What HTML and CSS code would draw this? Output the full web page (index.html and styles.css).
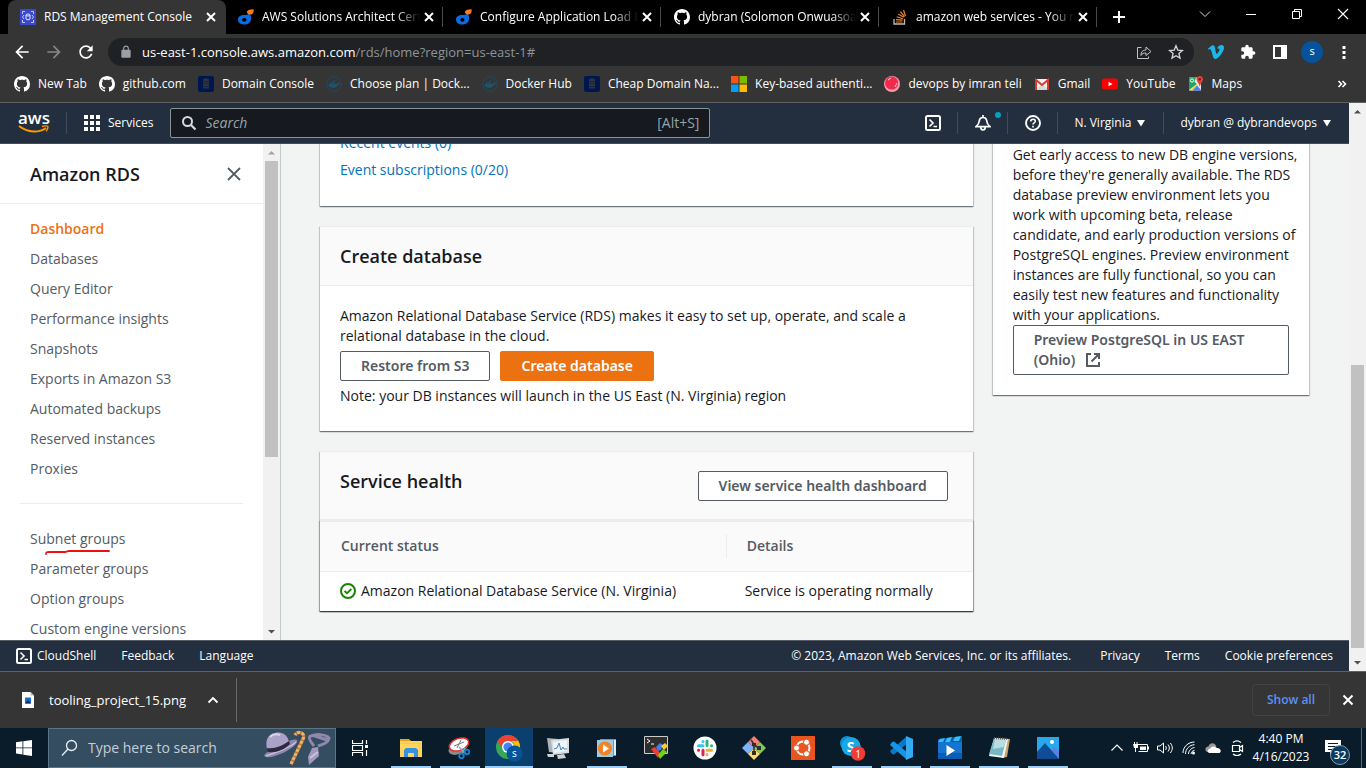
FILE: index.html
```html
<!DOCTYPE html>
<html lang="en">
<head>
<meta charset="utf-8">
<title>RDS Management Console</title>
<link rel="stylesheet" href="styles.css">
</head>
<body>
<svg class="sprite" aria-hidden="true">
  <symbol id="close" viewBox="0 0 16 16"><path d="M4 4l8 8M12 4l-8 8" fill="none" stroke="currentColor" stroke-width="2"/></symbol>
  <symbol id="github" viewBox="0 0 16 16"><path fill="#fff" d="M8 0C3.58 0 0 3.58 0 8c0 3.54 2.29 6.53 5.47 7.59.4.07.55-.17.55-.38 0-.19-.01-.82-.01-1.49-2.01.37-2.53-.49-2.69-.94-.09-.23-.48-.94-.82-1.13-.28-.15-.68-.52-.01-.53.63-.01 1.08.58 1.23.82.72 1.21 1.87.87 2.33.66.07-.52.28-.87.51-1.07-1.78-.2-3.64-.89-3.64-3.95 0-.87.31-1.59.82-2.15-.08-.2-.36-1.02.08-2.12 0 0 .67-.21 2.2.82.64-.18 1.32-.27 2-.27s1.36.09 2 .27c1.53-1.04 2.2-.82 2.2-.82.44 1.1.16 1.92.08 2.12.51.56.82 1.27.82 2.15 0 3.07-1.87 3.75-3.65 3.95.29.25.54.73.54 1.48 0 1.07-.01 1.93-.01 2.2 0 .21.15.46.55.38A8.01 8.01 0 0 0 16 8c0-4.42-3.58-8-8-8z"/></symbol>
  <symbol id="drop" viewBox="0 0 16 16"><path fill="#0b6be0" fill-rule="evenodd" d="M11.500 4.500L13 7c1 5-2 8.500-6.500 8.500C2.500 15.500 0 13.500 0 10.500S2.500 6 6 6c2 0 4.500 0 5.500-1.500zM6.300 9a2.200 1.800 0 1 0 .1 0z"/><path fill="#ff7a1a" d="M9 2.500C10 .5 12 .5 15.500.2c.6 2-.2 4.800-2.500 5.300C10.500 6 8.500 4.500 9 2.500z"/></symbol>
  <symbol id="docker" viewBox="0 0 16 16"><circle cx="8" cy="8" r="7.300" fill="none" stroke="#1f4a60"/><path fill="#23526c" d="M2.500 8h9c.2-.8 0-1.300-.2-1.700l.6-.6c.6.4.9.9.9 1.400.5-.1 1 0 1.300.3-.5.8-1.200 1-2 1-.8 2.400-2.600 3.400-5 3.400-2.900 0-4.500-1.300-4.600-3.800zM4 6.200h1.400v1.400H4zM5.800 6.200h1.400v1.400H5.800zM7.600 6.200H9v1.400H7.600zM7.600 4.400H9v1.400H7.600z"/></symbol>
  <symbol id="dbook" viewBox="0 0 16 16"><rect width="16" height="16" rx="2" fill="#00164e"/><path stroke="#2d3340" stroke-width="1.800" d="M5 4h6M5 6.500h6M5 9h6M5 11.500h6"/><path stroke="#2d3340" d="M7 2.500h2"/></symbol>
  <symbol id="shell" viewBox="0 0 16 16"><rect x="1" y="1" width="14" height="14" rx="1.500" fill="none" stroke="#fff" stroke-width="2"/><path d="M4.500 4.500L8 8l-3.500 3.500M8.500 11.500H12" fill="none" stroke="#fff" stroke-width="1.700"/></symbol>
</svg>

<header class="browser">
  <div class="tabstrip">
    <div class="tab active">
      <svg class="i16" viewBox="0 0 16 16"><rect width="16" height="16" fill="#3b48cc"/><path d="M2.500 5V2.500H5M11 2.500h2.500V5M13.500 11v2.500H11M5 13.500H2.500V11M4 6L2.500 8 4 10M12 6l1.500 2-1.500 2" fill="none" stroke="#c3c9fa"/><path d="M6 6v4c.5 1 3.500 1 4 0V6" fill="none" stroke="#e6e8ff"/><ellipse cx="8" cy="6" rx="2" ry="1" fill="none" stroke="#e6e8ff"/></svg>
      <span class="tab-title">RDS Management Console</span><button class="plain" aria-label="Close tab"><svg class="i16"><use href="#close"/></svg></button>
    </div>
    <div class="tab"><svg class="i16"><use href="#drop"/></svg><span class="tab-title fade">AWS Solutions Architect Certi</span><button class="plain" aria-label="Close tab"><svg class="i16"><use href="#close"/></svg></button></div>
    <div class="tab"><svg class="i16"><use href="#drop"/></svg><span class="tab-title fade">Configure Application Load B</span><button class="plain" aria-label="Close tab"><svg class="i16"><use href="#close"/></svg></button></div>
    <div class="tab"><svg class="i16"><use href="#github"/></svg><span class="tab-title fade">dybran (Solomon Onwuasoa</span><button class="plain" aria-label="Close tab"><svg class="i16"><use href="#close"/></svg></button></div>
    <div class="tab">
      <svg class="i16" viewBox="0 0 16 16"><path d="M2 10v5h10.500v-5" fill="none" stroke="#bcbbbb" stroke-width="1.300"/><path d="M4 13h6.500M4 10.600l6.500.6M4.700 7.800l6.200 1.900M6.200 5l5.500 3.300M8.500 2.700l4 5M11.500 1l2 6" fill="none" stroke="#f48024" stroke-width="1.200"/></svg>
      <span class="tab-title fade">amazon web services - You n</span><button class="plain" aria-label="Close tab"><svg class="i16"><use href="#close"/></svg></button>
    </div>
    <button class="plain newtab" aria-label="New tab"><svg class="i16" viewBox="0 0 16 16"><path d="M8 2v12M2 8h12" stroke="#fff" stroke-width="2"/></svg></button>
    <div class="window-controls">
      <button class="plain" aria-label="Search tabs"><svg class="i16" viewBox="0 0 16 16"><path d="M3 5.500l5 5 5-5" fill="none" stroke="#ddd"/></svg></button>
      <button class="plain" aria-label="Minimize"><svg class="i16" viewBox="0 0 16 16"><path d="M3 8.500h10" stroke="#fff"/></svg></button>
      <button class="plain" aria-label="Restore"><svg class="i16" viewBox="0 0 16 16"><path d="M3.500 5.500h7v7h-7zM5.500 5V3.500h7v7H11" fill="none" stroke="#fff"/></svg></button>
      <button class="plain" aria-label="Close window"><svg class="i16" viewBox="0 0 16 16"><path d="M3 3l10 10M13 3L3 13" stroke="#fff" stroke-width="1.100"/></svg></button>
    </div>
  </div>

  <div class="toolbar">
    <button class="plain tool" aria-label="Back"><svg class="i20" viewBox="0 0 24 24"><path fill="#fff" d="M20 11H7.830l5.590-5.590L12 4l-8 8 8 8 1.410-1.410L7.830 13H20v-2z"/></svg></button>
    <button class="plain tool" aria-label="Forward"><svg class="i20" viewBox="0 0 24 24"><path fill="#868686" d="M12 4l-1.410 1.410L16.170 11H4v2h12.170l-5.580 5.590L12 20l8-8z"/></svg></button>
    <button class="plain tool" aria-label="Reload"><svg class="i20" viewBox="0 0 24 24"><path fill="#fff" d="M17.650 6.350C16.200 4.900 14.210 4 12 4c-4.420 0-7.990 3.580-7.990 8s3.570 8 7.990 8c3.730 0 6.840-2.550 7.730-6h-2.080c-.82 2.330-3.040 4-5.650 4-3.310 0-6-2.690-6-6s2.690-6 6-6c1.660 0 3.140.69 4.220 1.780L13 11h7V4l-2.350 2.350z"/></svg></button>
    <div class="omnibox">
      <svg class="i12" viewBox="0 0 24 24"><path fill="#9aa0a6" d="M18 8h-1V6c0-2.760-2.240-5-5-5S7 3.240 7 6v2H6c-1.100 0-2 .9-2 2v10c0 1.100.9 2 2 2h12c1.100 0 2-.9 2-2V10c0-1.100-.9-2-2-2zm-9-2c0-1.660 1.340-3 3-3s3 1.340 3 3v2H9V6z"/></svg>
      <div class="url"><b>us-east-1.console.aws.amazon.com</b>/rds/home?region=us-east-1#</div>
      <button class="plain tool" aria-label="Share"><svg class="i16" viewBox="0 0 16 16"><path d="M5.500 3.500h-4v11h11v-2M5 11.500c0-4 2-5.500 5-5.500V3l5 4.500-5 4V9c-2.500 0-4 .5-5 2.500z" fill="none" stroke="#bdc1c6"/></svg></button>
      <button class="plain tool" aria-label="Bookmark"><svg class="i16" viewBox="0 0 16 16"><path d="M8 1.800l1.800 4.300 4.600.4-3.500 3 1.100 4.600L8 11.700l-4 2.400 1.100-4.600-3.500-3 4.600-.4z" fill="none" stroke="#d5d7da" stroke-width="1.300"/></svg></button>
    </div>
    <div class="tools">
      <button class="plain tool" aria-label="Vimeo"><svg class="i16" viewBox="0 0 24 24"><path fill="#1ab7ea" d="M23.980 6.420c-.1 2.340-1.740 5.540-4.900 9.610-3.270 4.250-6.020 6.370-8.290 6.370-1.410 0-2.580-1.300-3.550-3.880L5.320 11.400C4.600 8.820 3.830 7.520 3.010 7.520c-.18 0-.8.380-1.880 1.130L0 7.200a315 315 0 0 0 3.500-3.130C5.080 2.700 6.270 1.980 7.060 1.910c1.860-.18 3.010 1.100 3.440 3.840.47 2.950.79 4.790.97 5.500.54 2.450 1.130 3.680 1.780 3.680.5 0 1.260-.8 2.260-2.390 1.010-1.590 1.540-2.800 1.620-3.620.14-1.370-.4-2.060-1.620-2.060-.57 0-1.160.12-1.770.39 1.180-3.870 3.430-5.760 6.760-5.640 2.470.06 3.630 1.660 3.490 4.800z"/></svg></button>
      <button class="plain tool" aria-label="Extensions"><svg class="i16" viewBox="0 0 24 24"><path fill="#fff" d="M20.500 11H19V7c0-1.100-.9-2-2-2h-4V3.500C13 2.120 11.880 1 10.500 1S8 2.120 8 3.500V5H4c-1.100 0-1.990.9-1.990 2v3.800H3.500c1.490 0 2.700 1.210 2.700 2.700s-1.210 2.700-2.700 2.700H2V20c0 1.100.9 2 2 2h3.800v-1.500c0-1.490 1.210-2.700 2.700-2.700 1.490 0 2.700 1.210 2.700 2.700V22H17c1.100 0 2-.9 2-2v-4h1.500c1.380 0 2.500-1.120 2.500-2.500S21.880 11 20.500 11z"/></svg></button>
      <button class="plain tool" aria-label="Side panel"><svg class="i16" viewBox="0 0 16 16"><path fill="#fff" fill-rule="evenodd" d="M1 1h14v14H1zM3 3v10h6V3z"/></svg></button>
      <button class="plain tool" aria-label="Profile"><span class="avatar">s</span></button>
      <button class="plain tool" aria-label="Menu"><svg class="i16" viewBox="0 0 16 16"><path fill="#fff" d="M6.500 2h3v3h-3zM6.500 7h3v3h-3zM6.500 12h3v3h-3z"/></svg></button>
    </div>
  </div>

  <nav class="bookmarks">
    <a href="#"><svg class="i16"><use href="#github"/></svg><span>New Tab</span></a>
    <a href="#"><svg class="i16"><use href="#github"/></svg><span>github.com</span></a>
    <a href="#"><svg class="i16"><use href="#dbook"/></svg><span>Domain Console</span></a>
    <a href="#"><svg class="i16"><use href="#docker"/></svg><span>Choose plan | Dock...</span></a>
    <a href="#"><svg class="i16"><use href="#docker"/></svg><span>Docker Hub</span></a>
    <a href="#"><svg class="i16"><use href="#dbook"/></svg><span>Cheap Domain Na...</span></a>
    <a href="#"><svg class="i16" viewBox="0 0 16 16"><path fill="#f65314" d="M0 0h7.500v7.500H0z"/><path fill="#7cbb00" d="M8.500 0H16v7.500H8.500z"/><path fill="#00a1f1" d="M0 8.500h7.500V16H0z"/><path fill="#ffbb00" d="M8.500 8.500H16V16H8.500z"/></svg><span>Key-based authenti...</span></a>
    <a href="#"><svg class="i16" viewBox="0 0 16 16"><circle cx="8" cy="8" r="8" fill="#ff9bad"/><circle cx="7.600" cy="7" r="6.600" fill="#f22a4c"/><path d="M4 4l3-2M11 11l2-4" stroke="#ffd5dc"/></svg><span>devops by imran teli</span></a>
    <a href="#"><svg class="i16" viewBox="0 0 16 16"><path fill="#f2f2f2" d="M1 3h14v11H1z"/><path fill="#d9d9d9" d="M1 14l7-6 7 6z"/><path fill="none" stroke="#d93a30" stroke-width="2" d="M2 14V4l6 5 6-5v10"/></svg><span>Gmail</span></a>
    <a href="#"><svg class="i16" viewBox="0 0 16 16"><rect y="2.500" width="16" height="11" rx="2.500" fill="#f00"/><path fill="#fff" d="M6.500 5.700v4.600l4-2.300z"/></svg><span>YouTube</span></a>
    <a href="#"><svg class="i16" viewBox="0 0 16 16"><path fill="#e8eaed" d="M1 1.500h12v13H1z"/><path fill="#1fa463" d="M1 1.500h7L6.500 6 9 8l-8 6z"/><path fill="#ffcf44" d="M2 14.500L8.500 8l1.500 1.500-5 5z"/><path fill="#4285f4" d="M4.500 14.500L9 9.500l4.500 5z"/><path fill="#db4437" d="M11.800 0C9.800 0 8.500 1.500 8.500 3.200c0 2.300 2.600 3.800 3.100 7.300h.4c.5-3.500 3.100-5 3.100-7.300C15.100 1.500 13.800 0 11.800 0z"/><circle cx="11.800" cy="3.300" r="1.200" fill="#7a1b14"/><circle cx="4" cy="4.500" r="1.600" fill="none" stroke="#fff"/></svg><span>Maps</span></a>
    <button class="plain more" aria-label="More bookmarks"><svg class="i16" viewBox="0 0 16 16"><path d="M4.500 5l3 3-3 3M8.500 5l3 3-3 3" fill="none" stroke="#fff" stroke-width="1.600"/></svg></button>
  </nav>
</header>

<div class="viewport">
  <div class="page">
    <header class="aws-bar">
      <a class="logo" href="#"><span>aws</span><svg viewBox="0 0 32 10"><path d="M1 1c9 7 20 7 27 2" fill="none" stroke="#f90" stroke-width="2"/><path d="M24 1.500c3-1 6-.7 6 .2 0 1.300-.8 3.300-2 4.600" fill="none" stroke="#f90" stroke-width="1.400"/></svg></a>
      <button class="plain services"><svg class="i16" viewBox="0 0 16 16"><path fill="#fff" d="M0 0h4v4H0zM6 0h4v4H6zM12 0h4v4h-4zM0 6h4v4H0zM6 6h4v4H6zM12 6h4v4h-4zM0 12h4v4H0zM6 12h4v4H6zM12 12h4v4h-4z"/></svg>Services</button>
      <label class="search"><svg class="i16" viewBox="0 0 16 16"><circle cx="6.500" cy="6.500" r="4.500" fill="none" stroke="#d5dbdb" stroke-width="2"/><path d="M10 10l4.500 4.500" stroke="#d5dbdb" stroke-width="2.200"/></svg><input type="search" placeholder="Search" aria-label="Search"><kbd>[Alt+S]</kbd></label>
      <nav class="aws-nav">
        <button class="plain sq" aria-label="CloudShell"><svg class="i16"><use href="#shell"/></svg></button>
        <button class="plain sq bell" aria-label="Notifications"><svg class="i16" viewBox="0 0 16 16"><path d="M8 0v2M1 11.700C3 10 4 8.500 4.200 6.200 4.500 3.700 6 2.500 8 2.500s3.500 1.200 3.800 3.700c.2 2.300 1.200 3.800 3.200 5.500z" fill="none" stroke="#fff" stroke-width="1.700"/><path d="M5.800 12c0 4 4.400 4 4.400 0" fill="none" stroke="#fff" stroke-width="1.700"/></svg><i></i></button>
        <button class="plain sq" aria-label="Help"><svg class="i16" viewBox="0 0 16 16"><circle cx="8" cy="8" r="7" fill="none" stroke="#fff" stroke-width="1.900"/><path d="M5.700 6.500c0-3 4.600-3 4.600-.2 0 1.500-2.300 1.600-2.300 3.200M8 10.800v1.700" fill="none" stroke="#fff" stroke-width="1.600"/></svg></button>
        <button class="plain menu">N. Virginia<svg class="caret" viewBox="0 0 8 8"><path fill="#fff" d="M0 1h8L4 7.500z"/></svg></button>
        <button class="plain menu">dybran @ dybrandevops<svg class="caret" viewBox="0 0 8 8"><path fill="#fff" d="M0 1h8L4 7.500z"/></svg></button>
      </nav>
    </header>

    <div class="console">
      <aside class="side">
        <div class="side-body">
          <div class="side-head"><h1>Amazon RDS</h1><button class="plain" aria-label="Close navigation"><svg class="i16" viewBox="0 0 16 16"><path d="M2 2l12 12M14 2L2 14" stroke="#545b64" stroke-width="1.800"/></svg></button></div>
          <ul>
            <li><a class="current" href="#">Dashboard</a></li>
            <li><a href="#">Databases</a></li>
            <li><a href="#">Query Editor</a></li>
            <li><a href="#">Performance insights</a></li>
            <li><a href="#">Snapshots</a></li>
            <li><a href="#">Exports in Amazon S3</a></li>
            <li><a href="#">Automated backups</a></li>
            <li><a href="#">Reserved instances</a></li>
            <li><a href="#">Proxies</a></li>
          </ul>
          <hr>
          <ul>
            <li class="marked"><a href="#">Subnet groups</a><svg viewBox="0 0 66 8"><path d="M1 5c0-2 1-2 3-2h16l4-1h40" fill="none" stroke="#f00f0f" stroke-width="1.800" stroke-linecap="round"/></svg></li>
            <li><a href="#">Parameter groups</a></li>
            <li><a href="#">Option groups</a></li>
            <li><a href="#">Custom engine versions</a></li>
          </ul>
        </div>
        <div class="scroll side-scroll"><svg viewBox="0 0 17 17"><path fill="#a3a3a3" d="M5 10.500h7L8.500 7z"/></svg><div class="track"><div class="thumb side-thumb"></div></div><svg viewBox="0 0 17 17"><path fill="#505050" d="M5 7h7l-3.500 3.500z"/></svg></div>
      </aside>

      <main>
        <div class="scrolled">
          <div class="left">
            <section class="card"><div class="links"><a href="#">Recent events (0)</a><a href="#">Event subscriptions (0/20)</a></div></section>
            <section class="card">
              <div class="card-head"><h2>Create database</h2></div>
              <div class="card-body">
                <p>Amazon Relational Database Service (RDS) makes it easy to set up, operate, and scale a relational database in the cloud.</p>
                <div class="actions"><button class="btn">Restore from S3</button><button class="btn primary">Create database</button></div>
                <p>Note: your DB instances will launch in the US East (N. Virginia) region</p>
              </div>
            </section>
            <section class="card">
              <div class="card-head"><h2>Service health</h2><button class="btn">View service health dashboard</button></div>
              <table>
                <thead><tr><th>Current status</th><th><span>Details</span></th></tr></thead>
                <tbody><tr><td><div class="status"><svg class="i16" viewBox="0 0 16 16"><circle cx="8" cy="8" r="7" fill="none" stroke="#1d8102" stroke-width="2"/><path d="M4.500 8l2.500 2.300 4.300-4.300" fill="none" stroke="#1d8102" stroke-width="1.900"/></svg>Amazon Relational Database Service (N. Virginia)</div></td><td>Service is operating normally</td></tr></tbody>
              </table>
            </section>
          </div>
          <section class="card right">
            <p>Get early access to new DB engine versions, before they're generally available. The RDS database preview environment lets you work with upcoming beta, release candidate, and early production versions of PostgreSQL engines. Preview environment instances are fully functional, so you can easily test new features and functionality with your applications.</p>
            <button class="btn wide">Preview PostgreSQL in US EAST (Ohio) <svg class="i16 ext" viewBox="0 0 16 16"><path d="M6 2H2v12h12v-4M9 2h5v5M14 2L6.500 9.500" fill="none" stroke="#545b64" stroke-width="2"/></svg></button>
          </section>
        </div>
      </main>
    </div>

    <footer class="aws-foot">
      <a href="#"><svg class="i16"><use href="#shell"/></svg>CloudShell</a><a href="#">Feedback</a><a href="#">Language</a>
      <span class="copy">© 2023, Amazon Web Services, Inc. or its affiliates.</span><a href="#">Privacy</a><a href="#">Terms</a><a href="#">Cookie preferences</a>
    </footer>
  </div>
  <div class="scroll"><svg viewBox="0 0 17 17"><path fill="#505050" d="M5 10.500h7L8.500 7z"/></svg><div class="track"><div class="thumb page-thumb"></div></div><svg viewBox="0 0 17 17"><path fill="#505050" d="M5 7h7l-3.500 3.500z"/></svg></div>
</div>

<div class="downloads">
  <button class="plain file"><svg class="i16" viewBox="0 0 16 16"><path fill="#fff" d="M2 0h8.500L14 3.500V16H2z"/><path fill="#bbb" d="M10.500 0L14 3.500h-3.500z"/><path fill="#1d6fc4" d="M5 5.500h6v6H5z"/><path fill="#0c2f66" d="M5 11.500l3-3.500 3 3.500z"/></svg><span>tooling_project_15.png</span><svg class="i16" viewBox="0 0 16 16"><path d="M3.500 10.500L8 6l4.500 4.500" fill="none" stroke="#fff" stroke-width="1.800"/></svg></button>
  <button class="showall">Show all</button>
  <button class="plain" aria-label="Close downloads"><svg class="i16" viewBox="0 0 16 16"><path d="M3.500 3.500l9 9M12.500 3.500l-9 9" stroke="#fff" stroke-width="2"/></svg></button>
</div>

<footer class="taskbar">
  <button class="plain start" aria-label="Start"><svg class="i16" viewBox="0 0 16 16"><path fill="#fff" d="M0 2.200l6.500-.9v6.200H0zM7.300 1.200L16 0v7.500H7.300zM0 8.300h6.500v6.200L0 13.600zM7.300 8.300H16V16l-8.700-1.200z"/></svg></button>
  <label class="winsearch">
    <svg class="i20" viewBox="0 0 20 20"><circle cx="12.500" cy="7.500" r="5" fill="none" stroke="#e8eef2" stroke-width="1.300"/><path d="M9 11l-6 6.500" stroke="#e8eef2" stroke-width="1.300"/></svg>
    <input type="text" placeholder="Type here to search" aria-label="Type here to search">
    <svg class="props" viewBox="0 0 68 36"><path d="M1 26c2-5 8-5 14-9 6-3 14-9 19-7 2 3-6 9-14 13-8 3-15 6-19 3z" fill="#8f87ad"/><path d="M3 26c6-2 24-8 30-14" fill="none" stroke="#c3bddb" stroke-width="1.500"/><path d="M4 19C2 10 5 4 12 3c8-2 13 3 14 9-7 5-15 8-22 7z" fill="#aaa2c8"/><path d="M7 7c3-3 7-3 10-2" fill="none" stroke="#d8d2ec" stroke-width="2"/><path d="M4 18c8 1 15-2 22-7l1 3c-6 6-14 9-22 8z" fill="#2c2940"/><path d="M28 34l12-25c3-6-5-9-8-4" fill="none" stroke="#b87838" stroke-width="3.500"/><path d="M28 34l12-25c3-6-5-9-8-4" fill="none" stroke="#edb46c" stroke-width="3" stroke-dasharray="3 1.500"/><path d="M51 16C43 6 46 4 55 7c8 3 13 4 10 0-4-3-12-3-17-1M66 7c0 6-6 7-11 9" fill="none" stroke="#8f88ae" stroke-width="3"/><path d="M49 18l6-1 1 9-10 9-1-8z" fill="#a098bd"/><path d="M47 28l8-6" stroke="#c8c2dc" stroke-width="2"/></svg>
  </label>
  <button class="plain app taskview" aria-label="Task View"><svg class="i16" viewBox="0 0 16 16"><path d="M.5 0v3.500h10V0M.5 16v-3.500h10V16M.5 5.500h10v5H.5zM14.500 0v4M14.500 10v6" fill="none" stroke="#fff" stroke-width="1.200"/><path fill="#fff" d="M13 5h3v3h-3z"/></svg></button>
  <div class="apps">
    <button class="plain app open" aria-label="File Explorer"><svg class="i24" viewBox="0 0 24 24"><path fill="#e8a317" d="M1 3h9l2 2v5H1z"/><path fill="#ffd45c" d="M1 5h22v16H1z"/><path fill="#ffc83d" d="M1 7h22v1H1z"/><path fill="#3393df" d="M5 20v-6l2-2h10l2 2v7h-4v-4H9v4H5z"/></svg></button>
    <button class="plain app open" aria-label="Snipping Tool"><svg class="i24" viewBox="0 0 24 24"><ellipse cx="10" cy="12" rx="10" ry="6" fill="#8b8b8b" transform="rotate(-25 10 12)"/><ellipse cx="11" cy="8.500" rx="10" ry="6" fill="#fff" stroke="#e13030" stroke-width="1.500" transform="rotate(-20 11 8.500)"/><path d="M6 10l10-4M9 12l4-8" stroke="#777"/><path d="M11 11l7 7M17 12l-3 6" stroke="#8ab" stroke-width="1.500"/><circle cx="13.500" cy="20" r="2.300" fill="none" stroke="#1584d6" stroke-width="1.700"/><circle cx="19" cy="16" r="2.300" fill="none" stroke="#1584d6" stroke-width="1.700"/></svg></button>
    <button class="plain app open active-app" aria-label="Chrome"><svg class="i28" viewBox="0 0 28 28"><circle cx="13" cy="13" r="12" fill="#34a853"/><path fill="#ea4335" d="M2.600 7A12 12 0 0 1 23.400 7H13a6 6 0 0 0-5.200 9z"/><path fill="#fbbc04" d="M23.400 7A12 12 0 0 1 13 25l5.200-9A6 6 0 0 0 16 7z"/><circle cx="13" cy="13" r="6" fill="#fff"/><circle cx="13" cy="13" r="4.600" fill="#4285f4"/><circle cx="19.500" cy="19.500" r="8" fill="#07539b"/><text x="19.500" y="23" class="mini">s</text></svg></button>
    <button class="plain app" aria-label="Monitor"><svg class="i24" viewBox="0 0 24 24"><path fill="#aeb4b8" d="M1 2l11 1v14L3 16z"/><path fill="#d9dddf" d="M5 4l18-2v15L7 19z"/><path fill="#eef5fa" d="M7 6l14-2v11L8 17z"/><path d="M8 13l3-1 2-5 2 7 2-3 1 2h3" fill="none" stroke="#3d8ac8"/><path fill="#cfd3d6" d="M11 19l7-1 2 4-8 1zM1 18h7v3H2z"/></svg></button>
    <button class="plain app open" aria-label="Media Player"><svg class="i24" viewBox="0 0 24 24"><path fill="#5e9cc4" d="M5 3h16v17H5z"/><path fill="#9ccbe6" d="M2 4h16v17H2z"/><path d="M20 4v15" stroke="#d9effa" stroke-width="2"/><circle cx="10" cy="12.500" r="7" fill="#f58220"/><path fill="#fff" d="M8 8.500v8l6-4z"/></svg></button>
    <button class="plain app" aria-label="MobaXterm"><svg class="i24" viewBox="0 0 24 24"><path fill="#2e2e2e" stroke="#ccc" d="M.5.500h23v17H.500z"/><path d="M3 3l3 2-3 2M7 8h3" fill="none" stroke="#fff"/><path fill="#3f7df0" d="M12 11l4-4 3 2-2 5-3 1z"/><path fill="#ffc928" d="M17 10l4-3 3 3-4 4z"/><path fill="#ef3b32" d="M7 13l4-2 6 7-3 4z"/><path fill="#6fd316" d="M14 19l5-6 4 3-7 7z"/></svg></button>
    <button class="plain app" aria-label="Slack"><svg class="i24" viewBox="0 0 24 24"><circle cx="12" cy="12" r="11.500" fill="#fff"/><g stroke-width="3" stroke-linecap="round" fill="none"><path stroke="#36c5f0" d="M10 5.500v.1M5.500 9.700H10"/><path stroke="#2eb67d" d="M14 5v4.500M18.500 9.800h.1"/><path stroke="#e01e5a" d="M10 14.200v4.500M5.500 14.200h.1"/><path stroke="#ecb22e" d="M14 14.200h4.500M14 18.600v.1"/></g></svg></button>
    <button class="plain app" aria-label="Git"><svg class="i24" viewBox="0 0 24 24"><path fill="#f27f78" d="M12 0l6 6-6 6-6-6z"/><path fill="#80b3ff" d="M6 6l6 6-6 6-6-6z"/><path fill="#7fc95c" d="M18 6l6 6-6 6-6-6z"/><path fill="#ffd96b" d="M12 12l6 6-6 6-6-6z"/><path d="M9 4l3 4v9M12 9l5 3" fill="none" stroke="#302d2a" stroke-width="1.500"/><path fill="#302d2a" d="M10 7h4v3h-4zM10 15h4v4h-4zM15 10h4v4h-4z"/></svg></button>
    <button class="plain app" aria-label="Ubuntu"><svg class="i24" viewBox="0 0 24 24"><path fill="#e95420" d="M0 0h24v24H0z"/><circle cx="12" cy="12" r="6.500" fill="none" stroke="#fff" stroke-width="2"/><g fill="#fff" stroke="#e95420"><circle cx="5.500" cy="12" r="3"/><circle cx="15.500" cy="6.200" r="3"/><circle cx="15.500" cy="17.800" r="3"/></g></svg></button>
    <button class="plain app open" aria-label="Skype"><svg class="i28" viewBox="0 0 28 28"><circle cx="9" cy="9" r="7" fill="#0b8fd3"/><circle cx="17" cy="16" r="7" fill="#0a86cc"/><circle cx="13" cy="12.500" r="9.500" fill="#19a8e6"/><text x="12.500" y="17.500" class="skype">S</text><circle cx="20" cy="19.500" r="7.300" fill="#f03b37"/><text x="20" y="23.500" class="badge-num">1</text></svg></button>
    <button class="plain app open" aria-label="Visual Studio Code"><svg class="i24" viewBox="0 0 24 24"><path fill="#0a78c8" d="M17 1L1 15l2 3 2 .5L19 7z"/><path fill="#1794e6" d="M17 23L1 9l2-3 2-.5L19 17z"/><path fill="#35aaf4" d="M17 0l7 3v18l-7 3z"/></svg></button>
    <button class="plain app open" aria-label="Movies"><svg class="i24" viewBox="0 0 24 24"><path fill="#0a5fb0" d="M0 3l24-3v6H0z"/><path fill="#35c0f5" d="M2 3l5-1-2 4H0zM9 2l5-1-2 5H7zM17 1l6-1-2 5h-6z"/><path fill="#1673cf" d="M0 6h24v17H0z"/><path fill="#0d5cb4" d="M0 17h24v6H0z"/><path fill="#fff" d="M8.500 9v11l8.500-5.500z"/></svg></button>
    <button class="plain app open" aria-label="Notepad"><svg class="i24" viewBox="0 0 24 24"><path fill="#c8a468" d="M8 2l15 1-3 18-5 1z"/><path fill="#f2f5f5" d="M7 2l14 1-4 19-15-2z"/><path fill="#78b8c4" d="M7 3l12 1-4 16-13-2z"/><path fill="#b9dde3" d="M8 3l11 1-2 7-11 2z"/><path d="M7 2l14 1" stroke="#555" stroke-dasharray="1 1" stroke-width="2"/></svg></button>
    <button class="plain app open" aria-label="Photos"><svg class="i24" viewBox="0 0 24 24"><path fill="#2aa8ef" d="M1 1h22v22H1z"/><path fill="#5f7fe0" d="M12 17l7-6 4 4v8H12z"/><path fill="#0f4c96" d="M1 16l8-9 14 16H1z"/><circle cx="16" cy="6" r="2" fill="#fff"/></svg></button>
  </div>
  <div class="tray">
    <svg class="i16" viewBox="0 0 16 16"><path d="M2.500 10.500L8 5l5.500 5.500" fill="none" stroke="#fff" stroke-width="1.200"/></svg>
    <svg class="i16" viewBox="0 0 16 16"><path d="M4.500 4.500h10v7h-9M15.500 6.500v3" fill="none" stroke="#fff"/><path fill="#fff" d="M7 6.500h6v3.500H7zM0 4h5v4H1z"/><path d="M1.500 2v2M4 2v2M2.500 8v4" stroke="#fff"/></svg>
    <svg class="i16" viewBox="0 0 16 16"><path d="M.5 6v4H3l3.500 3V3L3 6zM8.500 6c1 1.200 1 2.800 0 4M11 4.500c1.800 2 1.800 5 0 7M13.300 3c2.600 3 2.600 7 0 10" fill="none" stroke="#fff"/></svg>
    <svg class="i16" viewBox="0 0 16 16"><path d="M2 13C2 7 7 2 13.500 2M4.500 14c0-5 4-9 9-9.300M7.500 14c0-3 2.500-6 6-6.500M10 14c.3-2 1.500-3.300 3.500-3.700" fill="none" stroke="#fff"/><circle cx="12.500" cy="13" r="1.500" fill="#fff"/></svg>
    <svg class="i16" viewBox="0 0 16 16"><path fill="#9a9a9a" d="M1 11C-.5 9 1 6.500 3.500 6.500 4.500 2.500 10 2 11 6l2 6H2z"/><path fill="#fff" d="M4 13c-2-1-1.500-4 1-4.300C7 5.500 10 6 11.500 8c3-.5 5 2 4 4l-1 1z"/></svg>
    <svg class="i16" viewBox="0 0 16 16"><path d="M3.500 5.500h7v6h-7zM10.500 7.500l3-2v6l-3-2M4 2.500c2.500-2 5.500-2 8 0M4 14c2.500 2 5.500 2 8 0" fill="none" stroke="#fff" stroke-width="1.200"/></svg>
  </div>
  <div class="clock"><span>4:40 PM</span><span>4/16/2023</span></div>
  <button class="plain notes" aria-label="Notifications"><svg class="i16" viewBox="0 0 16 16"><path fill="#fff" d="M0 0h16v12H9l-4 3.500V12H0z"/><path d="M3 3.500h10M3 6.500h10M3 9.500h10" stroke="#0a1c29"/></svg><span>32</span></button>
</footer>
</body>
</html>
```
FILE: styles.css
```css
* { box-sizing: border-box; }
body { margin: 0; height: 100vh; display: flex; flex-direction: column; overflow: hidden; font: 14px/20px "Open Sans", sans-serif; color: #16191f; }
a { text-decoration: none; color: inherit; }
h1, h2, p, ul { margin: 0; padding: 0; }
ul { list-style: none; }
svg { display: block; flex: none; }
.sprite { position: absolute; width: 0; height: 0; }
.plain { border: 0; padding: 0; background: none; color: inherit; font: inherit; flex: none; }
.i12 { width: 14px; height: 14px; }
.i16 { width: 16px; height: 16px; }
.i20 { width: 20px; height: 20px; }
.i24 { width: 24px; height: 24px; }
.i28 { width: 28px; height: 28px; }

.browser { background: #353535; color: #fff; border-bottom: 1px solid #5f6163; font: 12px/16px "Open Sans", sans-serif; flex: none; }
.tabstrip { display: flex; background: #000; height: 34px; padding-left: 8px; }
.tab { width: 218px; display: flex; align-items: center; gap: 8px; padding: 0 6px 0 12px; border-right: 1px solid transparent; background: linear-gradient(#4a4a4a, #4a4a4a) right center / 1px 20px no-repeat; }
.tab.active { background: #353535; border-radius: 8px 8px 0 0; }
.tab-title { flex: 1; min-width: 0; white-space: nowrap; margin-right: -12px; }
.fade { -webkit-mask-image: linear-gradient(90deg, #000 82%, transparent 97%); mask-image: linear-gradient(90deg, #000 82%, transparent 97%); }
.newtab { margin-left: 13px; }
.window-controls { margin-left: auto; display: flex; gap: 30px; padding: 0 15px 6px 0; }
.toolbar { display: flex; align-items: center; height: 36px; padding-left: 6px; }
.tool { width: 32px; height: 28px; display: grid; place-items: center; }
.omnibox { flex: 1; display: flex; align-items: center; height: 28px; margin-left: 6px; padding: 0 2px 0 11px; border-radius: 14px; background: #202124; }
.url { flex: 1; margin-left: 9px; font-size: 13px; color: #8f9398; }
.url b { font-weight: 400; color: #fff; }
.tools { display: flex; padding: 0 6px; }
.avatar { width: 22px; height: 22px; border-radius: 50%; background: #07539b; line-height: 20px; font-size: 11px; }
.bookmarks { display: flex; align-items: center; gap: 12px; height: 32px; padding: 0 16px 4px 14px; }
.bookmarks a { display: flex; gap: 8px; white-space: nowrap; }
.more { margin-left: auto; }

.viewport { flex: 1; min-height: 0; display: flex; }
.page { flex: 1; min-width: 0; display: flex; flex-direction: column; }
.aws-bar { flex: none; display: flex; align-items: center; height: 41px; padding-left: 18px; background: #232f3e; border-bottom: 1px solid #414d5c; color: #fff; font-size: 12px; font-weight: 500; }
.logo { width: 49px; height: 22px; border-right: 1px solid #414d5c; font: 600 17px/12px "Open Sans", sans-serif; }
.logo span { display: block; height: 13px; }
.logo svg { width: 32px; height: 10px; }
.services { display: flex; align-items: center; gap: 8px; margin: 0 17px; }
.search { display: flex; align-items: center; gap: 8px; width: 540px; height: 30px; padding: 0 10px; border: 1px solid #879596; border-radius: 2px; background: #16191f; color: #95a5a6; font-size: 14px; font-weight: 400; }
.search input { flex: 1; min-width: 0; border: 0; padding: 0; background: none; font: italic 14px/20px "Open Sans", sans-serif; }
.search input::placeholder { color: #95a5a6; opacity: 1; }
.search kbd { font: inherit; }
.aws-nav { margin-left: auto; display: flex; align-items: center; }
.sq { width: 50px; height: 22px; display: grid; place-items: center; border-right: 1px solid #414d5c; position: relative; }
.bell i { position: absolute; right: 6px; top: 0; width: 6px; height: 6px; border-radius: 50%; background: #00a1c9; }
.menu { display: flex; align-items: center; gap: 6px; height: 22px; padding: 0 18px 0 16px; }
.menu + .menu { border-left: 1px solid #414d5c; }
.caret { width: 8px; height: 8px; }

.console { flex: 1; min-height: 0; display: flex; background: #f2f3f3; }
.side { width: 281px; flex: none; display: flex; background: #fff; border-right: 1px solid #c3c8cb; color: #545b64; }
.side-body { flex: 1; overflow: hidden; }
.side-head { display: flex; align-items: center; justify-content: space-between; height: 60px; padding: 0 21px 0 30px; border-bottom: 1px solid #eaeded; }
h1, h2 { font-size: 18px; line-height: 22px; font-weight: 600; color: #16191f; }
.side ul { padding: 10px 0 0 30px; }
.side li { height: 30px; line-height: 30px; position: relative; }
.side .current { color: #ec7211; font-weight: 600; }
.side hr { margin: 19px 20px 10px; border: 0; border-top: 1px solid #eaeded; }
.marked svg { position: absolute; left: 15px; top: 25px; width: 66px; height: 8px; }
.scroll { width: 17px; flex: none; display: flex; flex-direction: column; background: #f1f1f1; }
.scroll svg { width: 17px; height: 17px; }
.track { flex: 1; display: flex; flex-direction: column; padding: 0 2px; }
.thumb { background: #c1c1c1; }
.side-thumb { height: 64%; }
.page-thumb { height: 53%; margin: auto 0 6px; }

main { flex: 1; min-width: 0; overflow: hidden; padding: 0 40px 0 39px; }
.scrolled { display: grid; grid-template-columns: repeat(12, 1fr); gap: 20px; align-items: start; margin-top: -12px; }
.left { grid-column: span 8; display: grid; gap: 20px; }
.right { grid-column: span 4; padding: 12px 20px 20px; }
.right p { margin-right: -10px; }
.card { background: #fff; border-top: 1px solid #eaeded; box-shadow: 0 1px 1px 0 rgba(0, 28, 36, .4), 1px 1px 1px 0 rgba(0, 28, 36, .15), -1px 1px 1px 0 rgba(0, 28, 36, .15); }
.links { display: grid; gap: 7px; padding: 0 20px 26px; color: #0073bb; }
.card-head { display: flex; justify-content: space-between; align-items: flex-start; padding: 18px 25px 18px 20px; background: #fafafa; border-bottom: 1px solid #eaeded; }
.card-head .btn { margin-top: 1px; }
.card-body { padding: 20px 20px 25px; }
.actions { display: flex; gap: 10px; margin: 5px 0; }
.btn { min-height: 30px; padding: 4px 20px; border: 1px solid #545b64; border-radius: 2px; background: #fff; color: #545b64; font: 600 14px/20px "Noto Sans", sans-serif; }
.btn.primary { background: #ec7211; border-color: #ec7211; color: #fff; }
.btn.wide { display: block; width: 100%; text-align: left; }
.ext { display: inline-block; vertical-align: -3px; margin-left: 6px; }
table { width: 100%; border-collapse: collapse; text-align: left; border-top: 2px solid #eaeded; box-shadow: 0 1px 1px 0 rgba(0, 28, 36, .4), 1px 1px 1px 0 rgba(0, 28, 36, .15), -1px 1px 1px 0 rgba(0, 28, 36, .15); }
th { height: 50px; padding: 0 21px; background: #fafafa; border-bottom: 1px solid #eaeded; color: #545b64; font-weight: 600; }
th:first-child { width: 62%; }
th span { display: block; margin-left: -20px; padding-left: 20px; border-left: 1px solid #eaeded; line-height: 24px; }
td { height: 40px; padding: 0 20px; white-space: nowrap; }
.status { display: flex; align-items: center; gap: 5px; }

.aws-foot { flex: none; display: flex; align-items: center; gap: 25px; height: 31px; padding: 0 16px; background: #232f3e; border-top: 1px solid #545b64; color: #fff; font-size: 12px; line-height: 16px; font-weight: 500; }
.aws-foot a { display: flex; gap: 5px; }
.copy { margin-left: auto; margin-right: 4px; }

.downloads { flex: none; display: flex; align-items: center; gap: 10px; height: 57px; padding-right: 10px; border-top: 1px solid #5f6163; background: #353535; color: #fff; font: 13px/16px "Open Sans", sans-serif; }
.file { display: flex; align-items: center; gap: 13px; width: 237px; height: 44px; padding: 0 15px 0 20px; border-right: 1px solid #6a6a6a; text-align: left; }
.file span { flex: 1; }
.showall { margin-left: auto; width: 78px; height: 32px; border: 1px solid #424242; border-radius: 4px; background: none; color: #5b91f5; font: 600 12px/16px "Open Sans", sans-serif; }

.taskbar { flex: none; display: flex; align-items: center; height: 40px; background: #0a1c29; color: #fff; font: 12px/18px "Open Sans", sans-serif; }
.start { width: 48px; height: 40px; display: grid; place-items: center; }
.winsearch { display: flex; align-items: center; width: 288px; height: 40px; padding: 0 4px 0 10px; border: 1px solid #5c7487; background: #344d61; }
.winsearch input { flex: 1; min-width: 0; margin-left: 9px; border: 0; padding: 0; background: none; font: 14px/20px "Open Sans", sans-serif; }
.winsearch input::placeholder { color: #c5ced5; opacity: 1; }
.props { width: 68px; height: 36px; }
.app { width: 48px; height: 40px; display: grid; place-items: center; }
.app.open { background: linear-gradient(#9ccff5, #9ccff5) center bottom / 40px 2px no-repeat; }
.app.active-app { background: linear-gradient(#9ccff5, #9ccff5) center bottom / 48px 2px no-repeat #0b406e; }
.apps { display: flex; gap: 1px; margin-left: 3px; }
.mini, .skype, .badge-num { fill: #fff; text-anchor: middle; font: 10px "Open Sans", sans-serif; }
.skype { font-size: 14px; font-weight: 700; }
.tray { margin-left: auto; display: flex; gap: 8px; }
.clock { display: grid; width: 72px; margin-right: 8px; text-align: center; }
.notes { display: flex; align-items: flex-start; width: 37px; height: 40px; padding: 12px 0 0; margin-right: 4px; border-right: 1px solid #5d6a73; position: relative; }
.notes span { position: absolute; left: 5px; top: 17px; width: 20px; height: 20px; border: 1px solid #7f9db5; border-radius: 50%; background: #0d3a5c; font: 600 11px/18px "Open Sans", sans-serif; text-align: center; }
```
